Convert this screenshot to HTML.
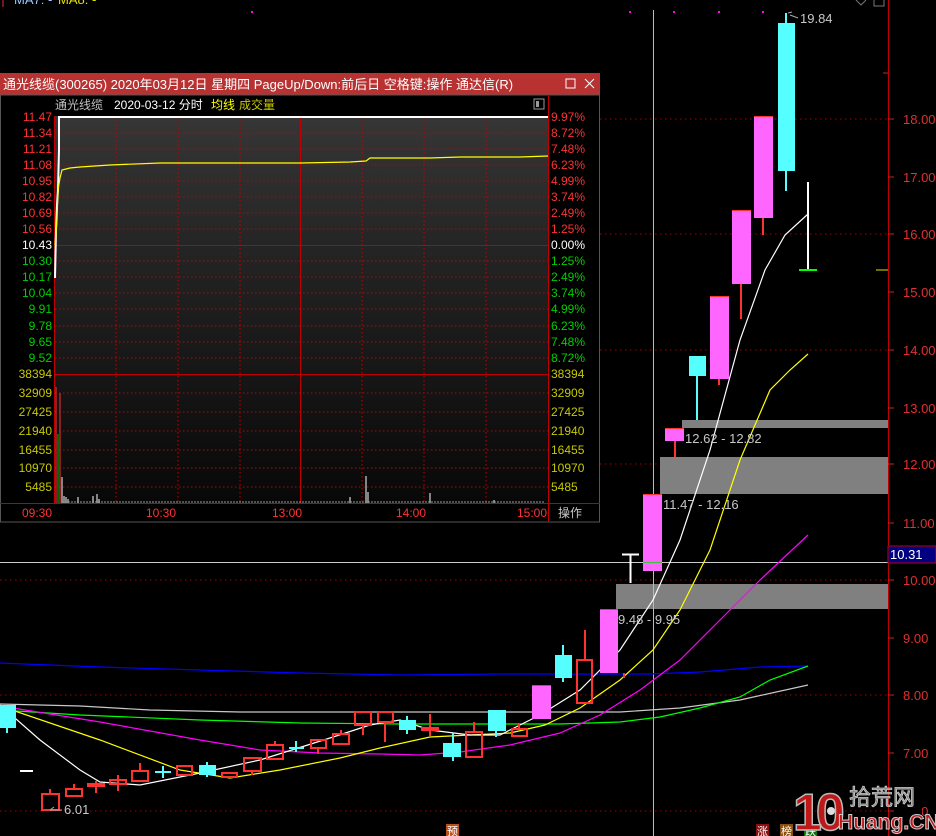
<!DOCTYPE html>
<html><head><meta charset="utf-8"><style>
html,body{margin:0;padding:0;background:#000;width:936px;height:836px;overflow:hidden}
svg{display:block}
text{font-family:"Liberation Sans","Noto Sans CJK SC",sans-serif}
</style></head><body>
<svg width="936" height="836" viewBox="0 0 936 836" xmlns="http://www.w3.org/2000/svg">
<defs>
<linearGradient id="bg" x1="0" y1="0" x2="0" y2="1">
<stop offset="0" stop-color="#363636"/><stop offset="0.35" stop-color="#242424"/><stop offset="0.65" stop-color="#171717"/><stop offset="1" stop-color="#080808"/>
</linearGradient>
</defs>
<rect width="936" height="836" fill="#000"/>
<line x1="3" y1="0" x2="3" y2="7" stroke="#e03030"/>
<text x="14" y="4" font-size="13" fill="#9cc8ff">MA7: -</text>
<text x="58" y="4" font-size="13" fill="#e0e000">MA8: -</text>
<g fill="#ff00ff"><rect x="251" y="11" width="2" height="2"/><rect x="629" y="11" width="2" height="2"/><rect x="673" y="11" width="2" height="2"/><rect x="718" y="11" width="2" height="2"/><rect x="762" y="11" width="2" height="2"/></g>
<path d="M856 0 L861 5 L866 0" stroke="#777" fill="none"/><rect x="874" y="-2" width="10" height="8" stroke="#777" fill="none"/>
<line x1="888.5" y1="0" x2="888.5" y2="836" stroke="#c00000"/>
<g stroke="#a00000" stroke-dasharray="1.5,3.5">
<line x1="0" y1="119" x2="888" y2="119"/><line x1="0" y1="234" x2="888" y2="234"/><line x1="0" y1="350" x2="888" y2="350"/><line x1="0" y1="464" x2="888" y2="464"/><line x1="0" y1="580" x2="888" y2="580"/><line x1="0" y1="695" x2="888" y2="695"/><line x1="0" y1="811" x2="888" y2="811"/>
</g>
<g stroke="#d02020"><line x1="883" y1="73" x2="888" y2="73"/><line x1="888" y1="119" x2="894" y2="119"/><line x1="888" y1="177" x2="894" y2="177"/><line x1="888" y1="234" x2="894" y2="234"/><line x1="888" y1="292" x2="894" y2="292"/><line x1="888" y1="350" x2="894" y2="350"/><line x1="888" y1="408" x2="894" y2="408"/><line x1="888" y1="464" x2="894" y2="464"/><line x1="888" y1="523" x2="894" y2="523"/><line x1="888" y1="580" x2="894" y2="580"/><line x1="888" y1="638" x2="894" y2="638"/><line x1="888" y1="695" x2="894" y2="695"/><line x1="888" y1="753" x2="894" y2="753"/><line x1="888" y1="811" x2="894" y2="811"/></g>
<g fill="#e03030" font-size="13">
<text x="903" y="124">18.00</text><text x="903" y="182">17.00</text><text x="903" y="239">16.00</text><text x="903" y="297">15.00</text><text x="903" y="355">14.00</text><text x="903" y="413">13.00</text><text x="903" y="469">12.00</text><text x="903" y="528">11.00</text><text x="903" y="585">10.00</text><text x="903" y="643">9.00</text><text x="903" y="700">8.00</text><text x="903" y="758">7.00</text><text x="903" y="816">6.00</text>
</g>
<g fill="#808080"><rect x="682" y="420" width="206" height="8"/><rect x="660" y="457" width="228" height="37"/><rect x="616" y="584" width="272" height="25"/></g>
<line x1="653.5" y1="10" x2="653.5" y2="836" stroke="#bbb"/>
<line x1="0" y1="562.5" x2="888" y2="562.5" stroke="#ccc"/>
<rect x="888" y="546" width="48" height="17" fill="#000080" stroke="#c00000"/>
<text x="890" y="559" font-size="13" fill="#fff">10.31</text>
<g fill="none" stroke-width="1.2">
<polyline stroke="#0000ff" points="0,663 100,667 200,670 300,673 400,675 500,674 560,674 650,674 700,672 760,667 808,666"/>
<polyline stroke="#c8c8c8" points="0,704 80,706 150,710 240,712 400,712 550,712 620,712 680,708 740,700 808,685"/>
<polyline stroke="#00ff00" points="0,710 80,715 200,720 300,723 400,724 500,724 560,724 620,722 660,717 700,708 740,697 770,680 808,666"/>
<polyline stroke="#ff00ff" points="0,706 100,722 200,740 260,750 320,753 380,754 420,755 460,752 510,745 560,733 600,715 640,690 680,660 720,620 760,580 808,535"/>
<polyline stroke="#ffff00" points="0,706 100,740 180,770 230,778 280,770 340,758 380,748 430,737 470,735 510,733 545,725 580,708 620,680 653,650 680,610 710,550 740,460 770,390 790,370 808,354"/>
<polyline stroke="#ffffff" points="0,705 40,740 80,770 100,782 140,785 200,773 260,760 330,738 370,725 400,720 430,730 470,735 500,735 540,715 580,690 620,650 653,600 680,540 710,450 740,340 765,270 785,235 808,214"/>
</g>
<g stroke="#ff3232" stroke-width="2" fill="none">
<rect x="42" y="794" width="17" height="16"/><line x1="50" y1="789" x2="50" y2="794"/>
<rect x="66" y="789" width="16" height="7"/><line x1="74" y1="784" x2="74" y2="789"/>
<rect x="110" y="780" width="16" height="4"/><line x1="118" y1="775" x2="118" y2="791"/>
<rect x="132" y="771" width="16" height="10"/><line x1="140" y1="763" x2="140" y2="771"/>
<rect x="177" y="766" width="15" height="9"/>
<rect x="222" y="773" width="15" height="4"/>
<rect x="244" y="758" width="17" height="13"/><line x1="252" y1="771" x2="252" y2="775"/>
<rect x="267" y="745" width="16" height="14"/><line x1="275" y1="741" x2="275" y2="745"/>
<rect x="311" y="740" width="15" height="8"/><line x1="318" y1="748" x2="318" y2="754"/>
<rect x="333" y="734" width="16" height="10"/><line x1="341" y1="730" x2="341" y2="734"/>
<rect x="355" y="712" width="16" height="13"/><line x1="363" y1="725" x2="363" y2="735"/>
<rect x="378" y="712" width="15" height="10"/><line x1="385" y1="722" x2="385" y2="742"/>
<rect x="466" y="732" width="16" height="25"/><line x1="474" y1="722" x2="474" y2="732"/>
<rect x="512" y="729" width="15" height="7"/><line x1="519" y1="723" x2="519" y2="729"/>
<rect x="577" y="660" width="15" height="43"/><line x1="585" y1="630" x2="585" y2="660"/>
</g>
<g fill="#ff3232"><rect x="87" y="783" width="18" height="4"/><line x1="96" y1="781" x2="96" y2="793" stroke="#ff3232" stroke-width="2"/>
<rect x="421" y="727" width="18" height="4"/><line x1="430" y1="714" x2="430" y2="736" stroke="#ff3232" stroke-width="2"/>
<rect x="623" y="673" width="2" height="5"/><rect x="674" y="441" width="2" height="16"/><rect x="740" y="284" width="2" height="35"/><rect x="762" y="218" width="2" height="17"/><rect x="718" y="379" width="2" height="6"/></g>
<g stroke="#55ffff" stroke-width="2">
<line x1="155" y1="772" x2="171" y2="772"/><line x1="163" y1="766" x2="163" y2="778"/>
<line x1="289" y1="748" x2="304" y2="748"/><line x1="296" y1="741" x2="296" y2="752"/>
<line x1="7" y1="728" x2="7" y2="733"/><line x1="207" y1="762" x2="207" y2="777"/>
<line x1="407" y1="716" x2="407" y2="734"/><line x1="453" y1="733" x2="453" y2="761"/>
<line x1="496" y1="731" x2="496" y2="737"/><line x1="563" y1="645" x2="563" y2="682"/>
<line x1="697" y1="376" x2="697" y2="420"/><line x1="786" y1="13" x2="786" y2="191"/>
</g>
<g fill="#55ffff">
<rect x="0" y="705" width="16" height="23"/><rect x="199" y="765" width="17" height="10"/>
<rect x="399" y="720" width="17" height="10"/><rect x="443" y="743" width="18" height="14"/>
<rect x="488" y="710" width="18" height="21"/><rect x="555" y="655" width="17" height="23"/>
<rect x="689" y="356" width="17" height="20"/><rect x="778" y="23" width="17" height="148"/>
</g>
<g fill="#ff66ff">
<rect x="532" y="686" width="19" height="33"/><rect x="600" y="609" width="18" height="64"/>
<rect x="643" y="494" width="19" height="77"/><rect x="665" y="429" width="19" height="12"/>
<rect x="710" y="297" width="19" height="82"/><rect x="732" y="211" width="19" height="73"/>
<rect x="754" y="116" width="19" height="102"/>
</g>
<g fill="#ff3232"><rect x="643" y="494" width="19" height="1"/><rect x="665" y="428" width="19" height="1"/><rect x="710" y="296" width="19" height="1"/><rect x="732" y="210" width="19" height="1"/><rect x="754" y="116" width="19" height="1"/><rect x="600" y="609" width="18" height="1"/><rect x="532" y="685" width="19" height="1"/></g>
<line x1="643" y1="562.5" x2="662" y2="562.5" stroke="#40c040"/>
<line x1="630.5" y1="555" x2="630.5" y2="583" stroke="#fff" stroke-width="2"/><line x1="622" y1="554.5" x2="639" y2="554.5" stroke="#fff" stroke-width="2"/>
<line x1="808" y1="182" x2="808" y2="270" stroke="#fff" stroke-width="2"/><line x1="799" y1="270" x2="817" y2="270" stroke="#00ff00" stroke-width="2"/>
<line x1="876" y1="270" x2="888" y2="270" stroke="#e0e000"/>
<line x1="20" y1="771" x2="33" y2="771" stroke="#fff" stroke-width="2"/>
<g fill="#c8c8c8" font-size="13">
<text x="800" y="23">19.84</text><path d="M788 13 L792 12 M790 15 L798 18" stroke="#aaa"/>
<text x="685" y="443">12.62 - 12.82</text>
<text x="663" y="509">11.47 - 12.16</text>
<text x="618" y="624">9.48 - 9.95</text>
<text x="64" y="814">6.01</text><path d="M50 810 L62 810 M50 810 L54 807" stroke="#aaa"/>
</g>
<rect x="446" y="824" width="13" height="12" fill="#b8501a"/><text x="447" y="835" font-size="11" fill="#fff">预</text>
<rect x="756" y="824" width="13" height="12" fill="#8a1010"/><text x="757" y="835" font-size="11" fill="#fff">涨</text>
<rect x="780" y="824" width="13" height="12" fill="#8a5010"/><text x="781" y="835" font-size="11" fill="#fff">榜</text>
<rect x="804" y="824" width="13" height="12" fill="#107010"/><text x="805" y="835" font-size="11" fill="#fff">跌</text>
<!-- watermark -->
<rect x="896" y="803" width="26" height="16" fill="#000"/>
<text x="793" y="830" font-size="52" font-weight="bold" fill="#c01818" stroke="#bbb" stroke-width="1.5" letter-spacing="-6">10</text>
<g fill="#ddd"><circle cx="831" cy="811" r="4"/></g>
<text x="849" y="805" font-size="22" fill="#777" stroke="#ccc" stroke-width="0.8">拾荒网</text>
<text x="838" y="829" font-size="21" font-weight="bold" fill="#c01818" stroke="#ccc" stroke-width="1">Huang.CN</text>

<rect x="0" y="73" width="600" height="450" fill="#000"/>
<rect x="0" y="73" width="600" height="22" fill="#b83232"/>
<text x="3" y="89" font-size="13" fill="#fff">通光线缆(300265) 2020年03月12日 星期四 PageUp/Down:前后日 空格键:操作 通达信(R)</text>
<rect x="566" y="79" width="9" height="9" fill="none" stroke="#fff"/>
<path d="M585 79 L594 88 M594 79 L585 88" stroke="#fff"/>
<rect x="0.5" y="95" width="599" height="427" fill="none" stroke="#555"/>
<text x="55" y="109" font-size="12" fill="#c0c0c0">通光线缆</text>
<text x="114" y="109" font-size="12" fill="#fff">2020-03-12 分时</text>
<text x="211" y="109" font-size="12" fill="#ffff00">均线</text>
<text x="239" y="109" font-size="12" fill="#c8c800">成交量</text>
<rect x="534" y="99" width="10" height="10" fill="none" stroke="#999"/><rect x="536" y="101" width="3" height="6" fill="#999"/>
<rect x="55" y="116" width="493" height="387" fill="url(#bg)"/>
<g stroke="#c00000" stroke-dasharray="1.5,2.5">
<line x1="55" y1="133" x2="548" y2="133"/><line x1="55" y1="149" x2="548" y2="149"/><line x1="55" y1="165" x2="548" y2="165"/><line x1="55" y1="181" x2="548" y2="181"/><line x1="55" y1="197" x2="548" y2="197"/><line x1="55" y1="213" x2="548" y2="213"/><line x1="55" y1="229" x2="548" y2="229"/><line x1="55" y1="261" x2="548" y2="261"/><line x1="55" y1="277" x2="548" y2="277"/><line x1="55" y1="293" x2="548" y2="293"/><line x1="55" y1="309" x2="548" y2="309"/><line x1="55" y1="326" x2="548" y2="326"/><line x1="55" y1="342" x2="548" y2="342"/><line x1="55" y1="358" x2="548" y2="358"/><line x1="55" y1="393" x2="548" y2="393"/><line x1="55" y1="412" x2="548" y2="412"/><line x1="55" y1="431" x2="548" y2="431"/><line x1="55" y1="450" x2="548" y2="450"/><line x1="55" y1="468" x2="548" y2="468"/><line x1="55" y1="487" x2="548" y2="487"/>
<line x1="116" y1="116" x2="116" y2="503"/><line x1="178" y1="116" x2="178" y2="503"/><line x1="240" y1="116" x2="240" y2="503"/><line x1="362" y1="116" x2="362" y2="503"/><line x1="424" y1="116" x2="424" y2="503"/><line x1="486" y1="116" x2="486" y2="503"/>
</g>
<g stroke="#c00000">
<line x1="55" y1="245.5" x2="548" y2="245.5"/><line x1="55" y1="374.5" x2="548" y2="374.5"/>
<line x1="300.5" y1="116" x2="300.5" y2="503"/><line x1="548.5" y1="96" x2="548.5" y2="522"/><line x1="54.5" y1="116" x2="54.5" y2="503"/>
<line x1="0" y1="503.5" x2="600" y2="503.5"/>
</g>
<polyline fill="none" stroke="#fff" stroke-width="2" points="55,278 56,230 57,205 58,190 59,150 59,117 548,117"/>
<polyline fill="none" stroke="#ffff00" stroke-width="1.2" points="55,245 57,220 58,190 60,178 62,170 70,168 80,167 110,165 160,163 300,163 350,162 366,161 370,158 430,158 460,157 520,157 548,156"/>
<line x1="56" y1="387" x2="56" y2="503" stroke="#ff3232"/><line x1="58" y1="434" x2="58" y2="503" stroke="#00c000"/><line x1="60" y1="393" x2="60" y2="503" stroke="#ff3232"/>
<g stroke="#fff"><line x1="62" y1="477" x2="62" y2="503"/><line x1="64" y1="496" x2="64" y2="503"/><line x1="66" y1="497" x2="66" y2="503"/><line x1="68" y1="499" x2="68" y2="503"/><line x1="78" y1="497" x2="78" y2="503"/><line x1="93" y1="496" x2="93" y2="503"/><line x1="97" y1="494" x2="97" y2="503"/><line x1="99" y1="499" x2="99" y2="503"/><line x1="350" y1="497" x2="350" y2="503"/><line x1="366" y1="476" x2="366" y2="503"/><line x1="368" y1="492" x2="368" y2="503"/><line x1="430" y1="493" x2="430" y2="503"/><line x1="494" y1="500" x2="494" y2="503"/><line x1="62" y1="502" x2="545" y2="502" stroke="#999" stroke-dasharray="2,1"/></g>
<g font-size="12" text-anchor="end">
<g fill="#ff3232"><text x="52" y="121">11.47</text><text x="52" y="137">11.34</text><text x="52" y="153">11.21</text><text x="52" y="169">11.08</text><text x="52" y="185">10.95</text><text x="52" y="201">10.82</text><text x="52" y="217">10.69</text><text x="52" y="233">10.56</text></g>
<text x="52" y="249" fill="#fff">10.43</text>
<g fill="#00d000"><text x="52" y="265">10.30</text><text x="52" y="281">10.17</text><text x="52" y="297">10.04</text><text x="52" y="313">9.91</text><text x="52" y="330">9.78</text><text x="52" y="346">9.65</text><text x="52" y="362">9.52</text></g>
<g fill="#c8c800"><text x="52" y="378">38394</text><text x="52" y="397">32909</text><text x="52" y="416">27425</text><text x="52" y="435">21940</text><text x="52" y="454">16455</text><text x="52" y="472">10970</text><text x="52" y="491">5485</text></g>
</g>
<g font-size="12">
<g fill="#ff3232"><text x="551" y="121">9.97%</text><text x="551" y="137">8.72%</text><text x="551" y="153">7.48%</text><text x="551" y="169">6.23%</text><text x="551" y="185">4.99%</text><text x="551" y="201">3.74%</text><text x="551" y="217">2.49%</text><text x="551" y="233">1.25%</text></g>
<text x="551" y="249" fill="#fff">0.00%</text>
<g fill="#00d000"><text x="551" y="265">1.25%</text><text x="551" y="281">2.49%</text><text x="551" y="297">3.74%</text><text x="551" y="313">4.99%</text><text x="551" y="330">6.23%</text><text x="551" y="346">7.48%</text><text x="551" y="362">8.72%</text></g>
<g fill="#c8c800"><text x="551" y="378">38394</text><text x="551" y="397">32909</text><text x="551" y="416">27425</text><text x="551" y="435">21940</text><text x="551" y="454">16455</text><text x="551" y="472">10970</text><text x="551" y="491">5485</text></g>
</g>
<g font-size="12" fill="#ff3232"><text x="22" y="517">09:30</text><text x="146" y="517">10:30</text><text x="272" y="517">13:00</text><text x="396" y="517">14:00</text><text x="517" y="517">15:00</text></g>
<text x="558" y="517" font-size="12" fill="#c8c8c8">操作</text>
</svg>
</body></html>
